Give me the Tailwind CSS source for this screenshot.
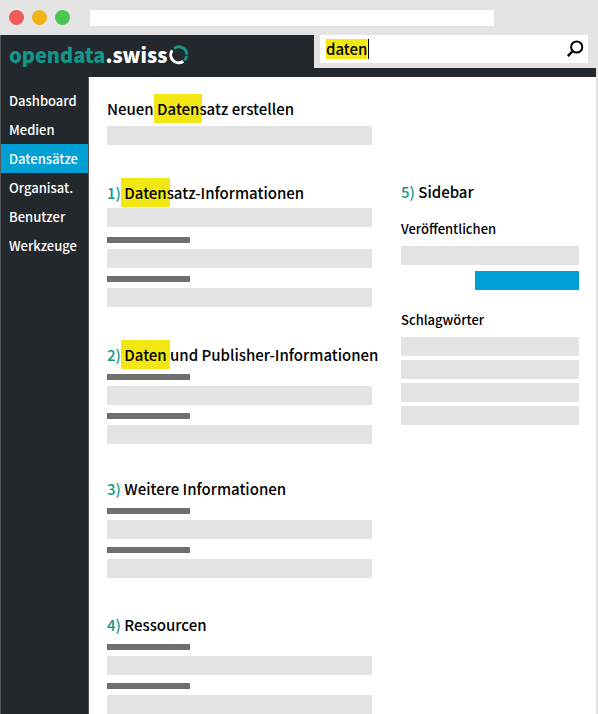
<!DOCTYPE html>
<html lang="de">
<head>
<meta charset="utf-8">
<meta name="viewport" content="width=device-width, initial-scale=1">
<title>opendata.swiss</title>
<script src="https://cdn.jsdelivr.net/npm/@tailwindcss/browser@4"></script>
</head>
<body class="bg-white font-['Noto_Sans_CJK_SC','Noto_Sans',sans-serif] text-black">
<div class="flex h-screen flex-col overflow-hidden border-r-2 border-[#e4e4e4]">
  <!-- Browser bar -->
  <div class="flex h-[35px] shrink-0 items-center gap-2 bg-[#e4e4e4] pl-[9px]">
    <span class="size-[15px] rounded-full bg-[#f15b5b]"></span>
    <span class="size-[15px] rounded-full bg-[#f0b31a]"></span>
    <span class="size-[15px] rounded-full bg-[#4bc64f]"></span>
    <input type="text" aria-label="Adresse" class="ml-3 mr-[102px] h-4 min-w-0 flex-1 bg-white outline-none">
  </div>

  <header class="flex h-[42px] shrink-0 border-l border-[#55595c] bg-[#23282c]">
    <a href="#" class="flex h-10 flex-1 items-center gap-[2px] pl-2 text-[20px] font-black leading-10 text-white">
      <span><span class="text-[#12978a]">opendata</span>.swiss</span>
      <svg class="size-5" viewBox="0 0 20 20" fill="none" stroke-width="3" aria-hidden="true">
        <path d="M3.2 5.4A7.8 7.8 0 0 0 14.2 16.2" stroke="#fff"/>
        <path d="M5.2 3.6A7.8 7.8 0 0 1 17.8 9.6" stroke="#12978a"/>
        <path d="M17.7 11A7.8 7.8 0 0 1 15.4 15.3" stroke="#12978a"/>
      </svg>
    </a>
    <form role="search" class="h-[33px] w-[282px] bg-[#e4e4e4] pl-1.5 pr-2">
      <div class="flex h-7 items-center bg-white pl-1.5 pr-1">
        <input type="text" aria-label="Suche" value="daten" class="field-sizing-content h-5 bg-[#f2e713] text-[15px] font-medium leading-5 outline-none">
        <span class="ml-px h-5 w-px bg-black"></span>
        <button type="button" aria-label="Suchen" class="ml-auto">
          <svg class="size-[18px]" viewBox="0 0 18 18" fill="none" stroke="#000" stroke-width="2" aria-hidden="true">
            <circle cx="10.7" cy="7" r="5.6"/>
            <path d="M6.8 11L1.8 16.2" stroke-width="2.4"/>
          </svg>
        </button>
      </div>
    </form>
  </header>

  <div class="flex min-h-0 flex-1">
    <nav class="w-[89px] shrink-0 border-x border-[#55595c] bg-[#23282c] pt-[9px] text-[13px] font-medium leading-[29px] text-white">
      <a href="#" class="block pl-2">Dashboard</a>
      <a href="#" class="block pl-2">Medien</a>
      <a href="#" aria-current="page" class="block bg-[#009fd4] pl-2">Datensätze</a>
      <a href="#" class="block pl-2">Organisat.</a>
      <a href="#" class="block pl-2">Benutzer</a>
      <a href="#" class="block pl-2">Werkzeuge</a>
    </nav>

    <main class="flex flex-1 gap-[29px] pl-[18px] pr-[17px] pt-[17px]">
      <form class="min-w-0 flex-[265]">
        <section class="mb-[33px]">
          <h1 class="mb-[3px] whitespace-nowrap text-[15px] font-medium leading-[29px]">Neuen <mark class="-mx-[3px] inline-block bg-[#f2e713] px-[3px] align-top">Daten</mark>satz erstellen</h1>
          <input type="text" aria-label="Titel" class="block h-[19px] w-full bg-[#e4e4e4]">
        </section>

        <section class="mb-[33px]">
          <h2 class="mb-px whitespace-nowrap text-[15px] font-medium leading-[29px]"><span class="text-[#12978a]">1)</span> <mark class="-mx-[3px] inline-block bg-[#f2e713] px-[3px] align-top">Daten</mark>satz-Informationen</h2>
          <input type="text" aria-label="Datensatz" class="mb-2.5 block h-[19px] w-full bg-[#e4e4e4]">
          <label for="info-a" class="mb-1.5 block h-1.5 w-[83px] bg-[#6f6f6f]"></label>
          <input id="info-a" type="text" aria-label="Information 1" class="mb-2 block h-[19px] w-full bg-[#e4e4e4]">
          <label for="info-b" class="mb-1.5 block h-1.5 w-[83px] bg-[#6f6f6f]"></label>
          <input id="info-b" type="text" aria-label="Information 2" class="block h-[19px] w-full bg-[#e4e4e4]">
        </section>

        <section class="mb-[30px]">
          <h2 class="mb-[5px] whitespace-nowrap text-[15px] font-medium leading-[29px]"><span class="text-[#12978a]">2)</span> <mark class="-mx-[3px] inline-block bg-[#f2e713] px-[3px] align-top">Daten</mark> und Publisher-Informationen</h2>
          <label for="pub-a" class="mb-1.5 block h-1.5 w-[83px] bg-[#6f6f6f]"></label>
          <input id="pub-a" type="text" aria-label="Publisher 1" class="mb-2 block h-[19px] w-full bg-[#e4e4e4]">
          <label for="pub-b" class="mb-1.5 block h-1.5 w-[83px] bg-[#6f6f6f]"></label>
          <input id="pub-b" type="text" aria-label="Publisher 2" class="block h-[19px] w-full bg-[#e4e4e4]">
        </section>

        <section class="mb-8">
          <h2 class="mb-[5px] whitespace-nowrap text-[15px] font-medium leading-[29px]"><span class="text-[#12978a]">3)</span> Weitere Informationen</h2>
          <label for="more-a" class="mb-1.5 block h-1.5 w-[83px] bg-[#6f6f6f]"></label>
          <input id="more-a" type="text" aria-label="Weitere Information 1" class="mb-2 block h-[19px] w-full bg-[#e4e4e4]">
          <label for="more-b" class="mb-1.5 block h-1.5 w-[83px] bg-[#6f6f6f]"></label>
          <input id="more-b" type="text" aria-label="Weitere Information 2" class="block h-[19px] w-full bg-[#e4e4e4]">
        </section>

        <section>
          <h2 class="mb-[5px] whitespace-nowrap text-[15px] font-medium leading-[29px]"><span class="text-[#12978a]">4)</span> Ressourcen</h2>
          <label for="res-a" class="mb-1.5 block h-1.5 w-[83px] bg-[#6f6f6f]"></label>
          <input id="res-a" type="text" aria-label="Ressource 1" class="mb-2 block h-[19px] w-full bg-[#e4e4e4]">
          <label for="res-b" class="mb-1.5 block h-1.5 w-[83px] bg-[#6f6f6f]"></label>
          <input id="res-b" type="text" aria-label="Ressource 2" class="block h-[19px] w-full bg-[#e4e4e4]">
        </section>
      </form>

      <aside class="min-w-0 flex-[178] pt-[83px]">
        <h2 class="mb-3 text-[15px] font-medium leading-[29px]"><span class="text-[#12978a]">5)</span> Sidebar</h2>
        <h3 class="mb-1.5 text-[13px] font-medium leading-[22px]">Veröffentlichen</h3>
        <input type="text" aria-label="Veröffentlichen" class="mb-1.5 block h-[19px] w-full bg-[#e4e4e4]">
        <button type="button" aria-label="Veröffentlichen" class="mb-[19px] ml-auto block h-[19px] w-[104px] bg-[#009fd4]"></button>
        <h3 class="mb-1.5 text-[13px] font-medium leading-[22px]">Schlagwörter</h3>
        <div class="flex flex-col gap-1">
          <input type="text" aria-label="Schlagwort 1" class="h-[19px] w-full bg-[#e4e4e4]">
          <input type="text" aria-label="Schlagwort 2" class="h-[19px] w-full bg-[#e4e4e4]">
          <input type="text" aria-label="Schlagwort 3" class="h-[19px] w-full bg-[#e4e4e4]">
          <input type="text" aria-label="Schlagwort 4" class="h-[19px] w-full bg-[#e4e4e4]">
        </div>
      </aside>
    </main>
  </div>
</div>
</body>
</html>
